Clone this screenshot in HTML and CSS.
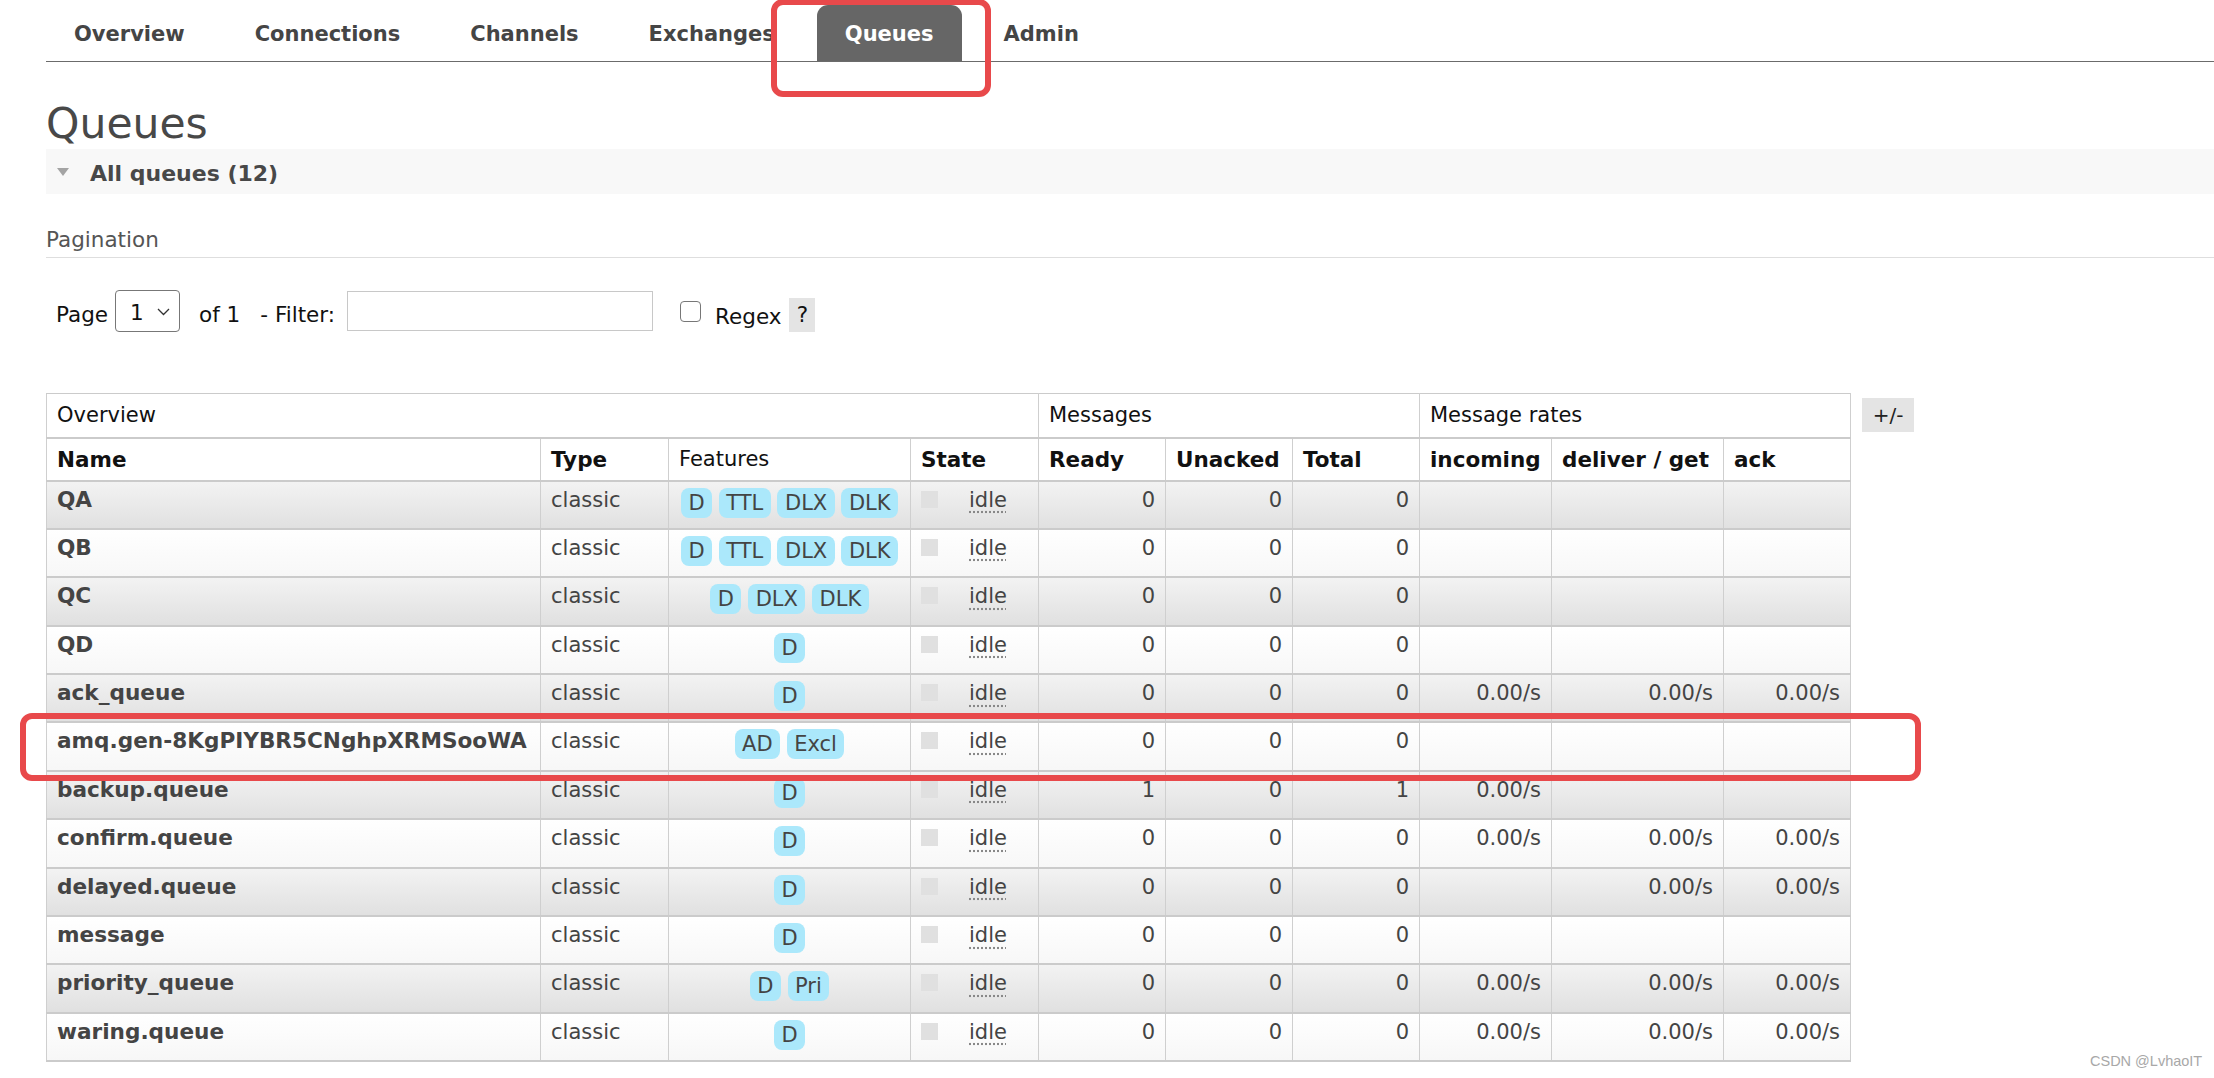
FILE: index.html
```html
<!DOCTYPE html>
<html lang="en">
<head>
<meta charset="utf-8">
<title>Queues</title>
<link rel="stylesheet" href="styles.css">
</head>
<body>
<div class="page">
  <nav class="tabs">
    <a class="tab">Overview</a>
    <a class="tab">Connections</a>
    <a class="tab">Channels</a>
    <a class="tab">Exchanges</a>
    <a class="tab active">Queues</a>
    <a class="tab">Admin</a>
  </nav>

  <h1 class="title">Queues</h1>

  <div class="bar"><span class="tri"></span><span>All queues (12)</span></div>

  <h3 class="sub">Pagination</h3>

  <div class="filter">
    <span class="lbl">Page</span>
    <span class="select"><span>1</span><svg class="chev" width="13" height="8" viewBox="0 0 13 8"><path d="M1 1 L6.5 6.5 L12 1" fill="none" stroke="#333" stroke-width="1.3"/></svg></span>
    <span class="lbl of">of 1</span>
    <span class="lbl flt">- Filter:</span>
    <span class="input"></span>
    <span class="check"></span>
    <span class="lbl regex">Regex</span>
    <span class="help">?</span>
  </div>

  <div class="tablewrap">
    <table class="list">
      <colgroup>
        <col class="c-name"><col class="c-type"><col class="c-feat"><col class="c-state">
        <col class="c-num"><col class="c-num"><col class="c-num">
        <col class="c-inc"><col class="c-del"><col class="c-ack">
      </colgroup>
      <thead>
        <tr class="h1row">
          <th colspan="4">Overview</th>
          <th colspan="3">Messages</th>
          <th colspan="3">Message rates</th>
        </tr>
        <tr class="h2row">
          <th class="b">Name</th>
          <th class="b">Type</th>
          <th>Features</th>
          <th class="b">State</th>
          <th class="b">Ready</th>
          <th class="b">Unacked</th>
          <th class="b">Total</th>
          <th class="b">incoming</th>
          <th class="b">deliver / get</th>
          <th class="b">ack</th>
        </tr>
      </thead>
      <tbody>
        <tr class="alt1">
          <td class="name">QA</td><td class="type">classic</td>
          <td class="feat"><span class="tag">D</span> <span class="tag">TTL</span> <span class="tag">DLX</span> <span class="tag">DLK</span></td>
          <td class="state"><span class="sq"></span><span class="idle">idle</span></td>
          <td class="num">0</td><td class="num">0</td><td class="num">0</td>
          <td class="num"></td><td class="num"></td><td class="num"></td>
        </tr>
        <tr class="alt2">
          <td class="name">QB</td><td class="type">classic</td>
          <td class="feat"><span class="tag">D</span> <span class="tag">TTL</span> <span class="tag">DLX</span> <span class="tag">DLK</span></td>
          <td class="state"><span class="sq"></span><span class="idle">idle</span></td>
          <td class="num">0</td><td class="num">0</td><td class="num">0</td>
          <td class="num"></td><td class="num"></td><td class="num"></td>
        </tr>
        <tr class="alt1">
          <td class="name">QC</td><td class="type">classic</td>
          <td class="feat"><span class="tag">D</span> <span class="tag">DLX</span> <span class="tag">DLK</span></td>
          <td class="state"><span class="sq"></span><span class="idle">idle</span></td>
          <td class="num">0</td><td class="num">0</td><td class="num">0</td>
          <td class="num"></td><td class="num"></td><td class="num"></td>
        </tr>
        <tr class="alt2">
          <td class="name">QD</td><td class="type">classic</td>
          <td class="feat"><span class="tag">D</span></td>
          <td class="state"><span class="sq"></span><span class="idle">idle</span></td>
          <td class="num">0</td><td class="num">0</td><td class="num">0</td>
          <td class="num"></td><td class="num"></td><td class="num"></td>
        </tr>
        <tr class="alt1">
          <td class="name">ack_queue</td><td class="type">classic</td>
          <td class="feat"><span class="tag">D</span></td>
          <td class="state"><span class="sq"></span><span class="idle">idle</span></td>
          <td class="num">0</td><td class="num">0</td><td class="num">0</td>
          <td class="num">0.00/s</td><td class="num">0.00/s</td><td class="num">0.00/s</td>
        </tr>
        <tr class="alt2">
          <td class="name">amq.gen-8KgPIYBR5CNghpXRMSooWA</td><td class="type">classic</td>
          <td class="feat"><span class="tag">AD</span> <span class="tag">Excl</span></td>
          <td class="state"><span class="sq"></span><span class="idle">idle</span></td>
          <td class="num">0</td><td class="num">0</td><td class="num">0</td>
          <td class="num"></td><td class="num"></td><td class="num"></td>
        </tr>
        <tr class="alt1">
          <td class="name">backup.queue</td><td class="type">classic</td>
          <td class="feat"><span class="tag">D</span></td>
          <td class="state"><span class="sq"></span><span class="idle">idle</span></td>
          <td class="num">1</td><td class="num">0</td><td class="num">1</td>
          <td class="num">0.00/s</td><td class="num"></td><td class="num"></td>
        </tr>
        <tr class="alt2">
          <td class="name">confirm.queue</td><td class="type">classic</td>
          <td class="feat"><span class="tag">D</span></td>
          <td class="state"><span class="sq"></span><span class="idle">idle</span></td>
          <td class="num">0</td><td class="num">0</td><td class="num">0</td>
          <td class="num">0.00/s</td><td class="num">0.00/s</td><td class="num">0.00/s</td>
        </tr>
        <tr class="alt1">
          <td class="name">delayed.queue</td><td class="type">classic</td>
          <td class="feat"><span class="tag">D</span></td>
          <td class="state"><span class="sq"></span><span class="idle">idle</span></td>
          <td class="num">0</td><td class="num">0</td><td class="num">0</td>
          <td class="num"></td><td class="num">0.00/s</td><td class="num">0.00/s</td>
        </tr>
        <tr class="alt2">
          <td class="name">message</td><td class="type">classic</td>
          <td class="feat"><span class="tag">D</span></td>
          <td class="state"><span class="sq"></span><span class="idle">idle</span></td>
          <td class="num">0</td><td class="num">0</td><td class="num">0</td>
          <td class="num"></td><td class="num"></td><td class="num"></td>
        </tr>
        <tr class="alt1">
          <td class="name">priority_queue</td><td class="type">classic</td>
          <td class="feat"><span class="tag">D</span> <span class="tag">Pri</span></td>
          <td class="state"><span class="sq"></span><span class="idle">idle</span></td>
          <td class="num">0</td><td class="num">0</td><td class="num">0</td>
          <td class="num">0.00/s</td><td class="num">0.00/s</td><td class="num">0.00/s</td>
        </tr>
        <tr class="alt2">
          <td class="name">waring.queue</td><td class="type">classic</td>
          <td class="feat"><span class="tag">D</span></td>
          <td class="state"><span class="sq"></span><span class="idle">idle</span></td>
          <td class="num">0</td><td class="num">0</td><td class="num">0</td>
          <td class="num">0.00/s</td><td class="num">0.00/s</td><td class="num">0.00/s</td>
        </tr>
      </tbody>
    </table>
    <span class="toggle">+/-</span>
  </div>
</div>

<div class="mark mark-tab"></div>
<div class="mark mark-row"></div>
<div class="watermark">CSDN @LvhaoIT</div>
</body>
</html>
```

FILE: styles.css
```css
* { box-sizing: border-box; }
html, body { margin: 0; padding: 0; background: #fff; }
body {
  font-family: "DejaVu Sans", Verdana, sans-serif;
  color: #222;
  position: relative;
  min-height: 1078px;
  overflow: hidden;
}
.page { margin-left: 46px; }

/* nav */
.tabs {
  display: flex;
  gap: 14px;
  padding-top: 5px;
  border-bottom: 1px solid #6b6b6b;
}
.tab {
  display: block;
  padding: 3px 28px 0;
  height: 56px;
  line-height: 53px;
  font-size: 21px;
  font-weight: bold;
  color: #454545;
  text-decoration: none;
}
.tab.active {
  background: #666;
  color: #fff;
  border-radius: 11px 11px 0 0;
}

/* title */
.title {
  margin: 37px 0 0;
  height: 50px;
  font-size: 42.5px;
  line-height: 50px;
  font-weight: normal;
  color: #484848;
}

/* section bar */
.bar {
  height: 45px;
  padding: 4px 0 0 11px;
  display: flex;
  align-items: center;
  background: #f8f8f8;
  font-size: 22px;
  font-weight: bold;
  color: #484848;
}
.tri {
  width: 0;
  height: 0;
  border-left: 6.5px solid transparent;
  border-right: 6.5px solid transparent;
  border-top: 8px solid #a4a4a4;
  margin-right: 21px;
  margin-top: -3px;
}

/* pagination */
.sub {
  margin: 34px 0 0;
  font-size: 21.5px;
  font-weight: normal;
  line-height: 24px;
  padding-bottom: 5px;
  border-bottom: 1px solid #dedede;
  color: #555;
}

.filter {
  display: flex;
  align-items: center;
  margin-top: 32px;
  padding-left: 10px;
  height: 42px;
  font-size: 21.5px;
  color: #111;
}
.lbl { margin-top: 6px; }
.select {
  margin-left: 7px;
  width: 65px;
  height: 42px;
  border: 1px solid #777;
  border-radius: 4px;
  display: flex;
  align-items: center;
  padding: 0 9px 0 14px;
}
.select span { margin-top: 2px; }
.chev { margin-left: auto; margin-top: 2px; }
.of { margin-left: 19px; }
.flt { margin-left: 20px; }
.input {
  margin-left: 12px;
  width: 306px;
  height: 40px;
  border: 1px solid #c8c8c8;
  background: #fff;
}
.check {
  margin-left: 27px;
  width: 21px;
  height: 21px;
  border: 1.5px solid #777;
  border-radius: 4px;
  background: #fff;
}
.regex { margin-left: 14px; margin-top: 10px; }
.help {
  margin-left: 8px;
  margin-top: 8px;
  width: 26px;
  height: 34px;
  line-height: 34px;
  text-align: center;
  background: #e4e4e4;
}

/* table */
.tablewrap {
  display: flex;
  align-items: flex-start;
  gap: 11px;
  margin-top: 61px;
}
table.list {
  border-collapse: collapse;
  table-layout: fixed;
  width: 1805px;
  font-size: 21px;
}
col.c-name { width: 494px; }
col.c-type { width: 128px; }
col.c-feat { width: 242px; }
col.c-state { width: 128px; }
col.c-num { width: 127px; }
col.c-inc { width: 132px; }
col.c-del { width: 172px; }
col.c-ack { width: 127px; }

table.list th, table.list td {
  border-left: 1px solid #cfcfcf;
  border-right: 1px solid #cfcfcf;
  border-top: 2px solid #cbcbcb;
  border-bottom: 2px solid #cbcbcb;
  padding: 0 10px;
  white-space: nowrap;
  overflow: hidden;
}
table.list thead tr.h1row th { border-top: 1px solid #cbcbcb; }
table.list th {
  text-align: left;
  font-weight: normal;
  vertical-align: middle;
  color: #111;
  background: #fff;
}
table.list th.b { font-weight: bold; font-size: 21.5px; }
tr.h1row { height: 44px; }
tr.h2row { height: 43px; }
table.list tbody tr { height: 48.4px; }
table.list td {
  vertical-align: top;
  padding-top: 6px;
  line-height: 24px;
  color: #444;
}
tr.alt1 { background: linear-gradient(#f3f3f3, #e0e0e0); }
tr.alt2 { background: linear-gradient(#ffffff, #f7f7f7); }

td.name { font-weight: bold; font-size: 21.6px; color: #111; }
td.type { color: #555; }
td.feat { text-align: center; }
.tag {
  display: inline-block;
  height: 30px;
  line-height: 30px;
  padding: 0 7.5px;
  border-radius: 8px;
  background: #abe8fb;
  color: #444;
}
.sq {
  display: inline-block;
  width: 17px;
  height: 17px;
  background: #e0e0e0;
  vertical-align: top;
  margin-top: 3px;
  margin-right: 31px;
}
.idle {
  color: #444;
  text-decoration: underline dotted #888;
  text-underline-offset: 5px;
}
td.num { text-align: right; padding-right: 11px; }

.toggle {
  display: block;
  margin-top: 5px;
  width: 52px;
  height: 34px;
  line-height: 34px;
  text-align: center;
  background: #e4e4e4;
  font-size: 20px;
  color: #222;
}

/* annotation overlays */
.mark {
  position: absolute;
  border: 6px solid #e8494b;
  border-radius: 12px;
  pointer-events: none;
}
.mark-tab { left: 771px; top: -1px; width: 220px; height: 98px; }
.mark-row { left: 20px; top: 713px; width: 1901px; height: 68px; }

.watermark {
  position: absolute;
  left: 2090px;
  top: 1053px;
  font-family: "Liberation Sans", Arial, sans-serif;
  font-size: 14.5px;
  color: #a8a8a8;
}
```
